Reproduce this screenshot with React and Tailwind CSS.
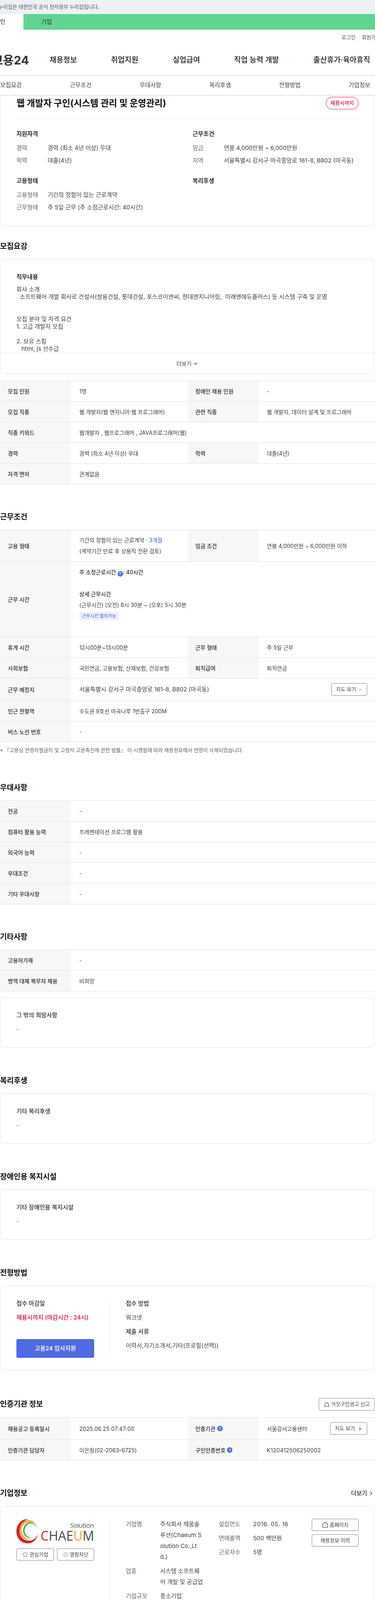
import { ChevronDown, ChevronRight, Star, X } from 'lucide-react';

function SectionTitle({ children, className = '' }) {
  return <h2 className={`h-[28px] mb-[18px] text-[19px] leading-[28px] font-semibold text-[#111] ${className}`}>{children}</h2>;
}

function Help({ className = '' }) {
  return (
    <span className={`inline-flex items-center justify-center w-[14px] h-[14px] rounded-full bg-[#4f6be3] text-white text-[9px] leading-none font-bold align-[-2px] ${className}`}>?</span>
  );
}

function Th({ children }) {
  return <div className="flex items-center pl-[20px] bg-[#f7f7f8] text-[14px] font-medium text-[#333]">{children}</div>;
}

function Td({ children, wide }) {
  return <div className={`flex items-center pl-[21px] text-[14px] text-[#444] ${wide ? 'col-span-3' : ''}`}>{children}</div>;
}

// row with 2 or 4 cells, height includes the bottom border
function Row({ h = 'h-[53px]', a, b, c, d }) {
  return (
    <div className={`grid grid-cols-[182px_298px_182px_298px] border-b border-[#e0e2e5] ${h}`}>
      <Th>{a}</Th>
      <Td wide={c === undefined}>{b}</Td>
      {c !== undefined && <Th>{c}</Th>}
      {c !== undefined && <Td>{d}</Td>}
    </div>
  );
}

function Table({ children }) {
  return <div className="border-t border-[#e0e2e5] -mb-[1px]">{children}</div>;
}

function TextCard({ title }) {
  return (
    <div className="h-[129px] px-[41px] pt-[33px] border border-[#e0e2e5] rounded-[10px]">
      <p className="h-[24px] leading-[24px] text-[15px] font-medium text-[#333]">{title}</p>
      <p className="mt-[12px] h-[24px] leading-[24px] text-[14px] text-[#555]">-</p>
    </div>
  );
}

function InfoRow({ label, value }) {
  return (
    <div className="flex h-[32px] items-center text-[15px]">
      <span className="w-[80px] shrink-0 text-[#666]">{label}</span>
      <span className="text-[#444] whitespace-nowrap">{value}</span>
    </div>
  );
}

function OutlineBtn({ children, className = '' }) {
  return (
    <button className={`flex items-center justify-center border border-[#7d8085] rounded-[4px] bg-white text-[13px] text-[#444] whitespace-nowrap ${className}`}>
      {children}
    </button>
  );
}

function Logo() {
  return (
    <svg viewBox="0 0 199 63" className="w-[199px] h-[63px] block">
      <path fill="#d2232a" d="M30 .5C10 1 0 17 0 33c0 17 13 30 29 30 14 0 23-10 26-23-5 11-14 17-24 16C17 55 8 44 8 31 8 17 17 6 30 .5Z" />
      <path fill="#f5a33b" d="M48 10C41 3.500 31 2 23 5 13 9 7 19 8.500 32 10 44 19 54 33 55 24 50 14 42 13 30c-.5-11 7-20 17-21 6-.5 13 0 18 1Z" />
      <path fill="#4cb748" d="M54 26C52 15 44 9 36 9 25 9 17 19 17 31c0 11 8 19 22 19-9-3-18-9-18-19 0-10 8-19 16-19 7 0 13 5 17 14Z" />
      <text x="198" y="23" textAnchor="end" fontFamily="Open Sans" fontSize="17" letterSpacing="-0.6" fill="#58595b">
        <tspan fill="#4cb748" fontWeight="600">S</tspan>olution
      </text>
      <text x="62" y="56" textLength="137" lengthAdjust="spacingAndGlyphs" fontFamily="Open Sans" fontSize="35" fill="#4a4a4c">
        <tspan fill="#d2232a">C</tspan>HAE<tspan fill="#f5a33b">U</tspan>M
      </text>
    </svg>
  );
}

const hSub = ['모집요강', '근무조건', '우대사항', '복리후생', '전형방법', '기업정보'];

export default function App() {
  return (
    <div className="w-[960px] overflow-hidden bg-white font-['Inter','Noto_Sans_CJK_KR',sans-serif]">
      {/* gov banner */}
      <div className="h-[36px] bg-[#edf0f5] flex items-center text-[13px] text-[#555] whitespace-nowrap">
        <span className="-ml-[4px]">누리집은 대한민국 공식 전자정부 누리집입니다.</span>
      </div>

      {/* user type tabs */}
      <div className="h-[40px] bg-[#61d491] flex items-center text-[15px] text-[#333]">
        <div className="w-[60px] h-full bg-white flex items-center"><span>인</span></div>
        <div className="w-[119px] h-full flex items-center justify-center border-r border-[#55c584]">기업</div>
      </div>

      {/* header */}
      <div className="h-[118px] border-b-2 border-[#eeeeee]">
        <div className="flex justify-end gap-[16px] -mr-[14px] pt-[10px] h-[38px] text-[13px] text-[#555] whitespace-nowrap">
          <span>로그인</span>
          <span>회원가입</span>
        </div>
        <nav className="flex items-center h-[56px] mt-[12px] text-[19px] font-medium text-[#222] whitespace-nowrap">
          <span className="-ml-[20px] w-[147px] text-[30px] font-bold text-[#333]">고용24</span>
          <span className="w-[157px]">채용정보</span>
          <span className="w-[158px]">취업지원</span>
          <span className="w-[157px]">실업급여</span>
          <span className="w-[203px]">직업 능력 개발</span>
          <span>출산휴가·육아휴직</span>
        </nav>
      </div>

      {/* section tabs */}
      <div className="relative z-10 h-[49px] flex -ml-[61px] items-center bg-white shadow-[0_1px_3px_rgba(0,0,0,0.2)] w-[1100px] text-[15px] text-[#444]">
        {hSub.map(t => (
          <span key={t} className="w-[178.4px] text-center">{t}</span>
        ))}
      </div>

      {/* summary card */}
      <div className="h-[336px] px-[41px] pt-[5px] border-x border-b border-[#e0e2e5] rounded-b-[10px]">
        <div className="flex items-center justify-between h-[32px]">
          <h1 className="text-[23px] font-bold text-[#111] whitespace-nowrap">웹 개발자 구인(시스템 관리 및 운영관리)</h1>
          <span className="w-[84px] h-[32px] flex items-center justify-center rounded-full border border-[#e6004d] text-[#e6004d] text-[13px] font-medium">채용시까지</span>
        </div>
        <div className="mt-[25px] border-t border-[#eeeeee]" />
        <div className="grid grid-cols-[451px_1fr] mt-[25px]">
          <div>
            <h3 className="h-[24px] leading-[24px] text-[15px] font-semibold text-[#333] mb-[8px]">지원자격</h3>
            <InfoRow label="경력" value="경력 (최소 4년 이상) 우대" />
            <InfoRow label="학력" value="대졸(4년)" />
          </div>
          <div>
            <h3 className="h-[24px] leading-[24px] text-[15px] font-semibold text-[#333] mb-[8px]">근무조건</h3>
            <InfoRow label="임금" value="연봉 4,000만원 ~ 6,000만원" />
            <InfoRow label="지역" value="서울특별시 강서구 마곡중앙로 161-8, B802 (마곡동)" />
          </div>
          <div className="mt-[24px]">
            <h3 className="h-[24px] leading-[24px] text-[15px] font-semibold text-[#333] mb-[8px]">고용형태</h3>
            <InfoRow label="고용형태" value="기간의 정함이 있는 근로계약" />
            <InfoRow label="근무형태" value="주 5일 근무 (주 소정근로시간: 40시간)" />
          </div>
          <div className="mt-[24px]">
            <h3 className="h-[24px] leading-[24px] text-[15px] font-semibold text-[#333] mb-[8px]">복리후생</h3>
          </div>
        </div>
      </div>

      {/* recruit */}
      <section className="mt-[38px]">
        <SectionTitle>모집요강</SectionTitle>
        <div className="border border-[#e0e2e5] rounded-[10px] overflow-hidden">
          <div className="h-[240px] px-[41px] pt-[33px] overflow-hidden border-b border-[#e0e2e5]">
            <h3 className="h-[24px] leading-[24px] text-[15px] font-semibold text-[#333] mb-[10px]">직무내용</h3>
            <p className="text-[15px] leading-[19px] text-[#444] whitespace-pre">{`회사 소개
  소프트웨어 개발 회사로 건설사(쌍용건설, 롯데건설, 포스코이앤씨, 현대엔지니어링,  미래엔에듀플러스) 등 시스템 구축 및 운영


모집 분야 및 자격 요건
1. 고급 개발자 모집

2. 보유 스킬
   html, js 선수급`}</p>
          </div>
          <div className="h-[53px] flex items-center justify-center gap-[4px] text-[14px] text-[#444]">
            더보기 <ChevronDown className="w-[14px] h-[14px]" strokeWidth={2.5} />
          </div>
        </div>
      </section>

      <div className="mt-[16px]">
        <Table>
          <Row a="모집 인원" b="1명" c="장애인 채용 인원" d="-" />
          <Row a="모집 직종" b="웹 개발자(웹 엔지니어·웹 프로그래머)" c="관련 직종" d="웹 개발자, 데이터 설계 및 프로그래머" />
          <Row a="직종 키워드" b="웹개발자 , 웹프로그래머 , JAVA프로그래머(웹)" />
          <Row a="경력" b="경력 (최소 4년 이상) 우대" c="학력" d="대졸(4년)" />
          <Row a="자격 면허" b="관계없음" />
        </Table>
      </div>

      {/* work conditions */}
      <section className="mt-[71px]">
        <SectionTitle>근무조건</SectionTitle>
        <Table>
          <Row
            h="h-[81px]"
            a="고용 형태"
            b={
              <div className="leading-[28px]">
                <p>기간의 정함이 있는 근로계약 <span className="text-[#3d63dd]">· 3개월</span></p>
                <p>(계약기간 만료 후 상용직 전환 검토)</p>
              </div>
            }
            c="임금 조건"
            d="연봉 4,000만원 ~ 6,000만원 이하"
          />
          <Row
            h="h-[193px]"
            a="근무 시간"
            b={
              <div className="self-start pt-[13px] leading-[28px]">
                <p className="font-medium text-[#333]">주 소정근로시간 <Help />: 40시간</p>
                <p className="mt-[28px] font-medium text-[#333]">상세 근무시간</p>
                <p>(근무시간) (오전) 8시 30분 ~ (오후) 5시 30분</p>
                <span className="block w-[101px] mt-[3px] text-center h-[22px] leading-[22px] rounded-[3px] bg-[#eef1fd] text-[11.5px] text-[#3d63dd]">근무시간 협의가능</span>
              </div>
            }
          />
          <Row a="휴게 시간" b="12시00분~13시00분" c="근무 형태" d="주 5일 근무" />
          <Row a="사회보험" b="국민연금, 고용보험, 산재보험, 건강보험" c="퇴직급여" d="퇴직연금" />
          <Row
            h="h-[57px]"
            a="근무 예정지"
            b={
              <div className="flex items-center justify-between w-full pr-[20px] text-[15px]">
                <span>서울특별시 강서구 마곡중앙로 161-8, B802 (마곡동)</span>
                <OutlineBtn className="w-[92px] h-[32px] gap-[4px]">지도 보기 <ChevronDown className="w-[12px] h-[12px]" /></OutlineBtn>
              </div>
            }
          />
          <Row a="인근 전철역" b="수도권 9호선 마곡나루 1번출구 200M" />
          <Row a="버스 노선 번호" b="-" />
        </Table>
        <p className="mt-[11px] h-[20px] leading-[20px] text-[13px] text-[#666] whitespace-nowrap">• 『고용상 연령차별금지 및 고령자 고용촉진에 관한 법률』 이 시행됨에 따라 채용정보에서 연령이 삭제되었습니다.</p>
      </section>

      {/* preference */}
      <section className="mt-[73px]">
        <SectionTitle>우대사항</SectionTitle>
        <Table>
          <Row a="전공" b="-" />
          <Row a="컴퓨터 활용 능력" b="프레젠테이션 프로그램 활용" />
          <Row a="외국어 능력" b="-" />
          <Row a="우대조건" b="-" />
          <Row a="기타 우대사항" b="-" />
        </Table>
      </section>

      {/* etc */}
      <section className="mt-[71px]">
        <SectionTitle>기타사항</SectionTitle>
        <Table>
          <Row a="고용허가제" b="-" />
          <Row a="병역 대체 복무자 채용" b="비희망" />
        </Table>
        <div className="mt-[16px]">
          <TextCard title="그 밖의 희망사항" />
        </div>
      </section>

      <section className="mt-[71px]">
        <SectionTitle>복리후생</SectionTitle>
        <TextCard title="기타 복리후생" />
      </section>

      <section className="mt-[71px]">
        <SectionTitle>장애인용 복지시설</SectionTitle>
        <TextCard title="기타 장애인용 복지시설" />
      </section>

      {/* apply */}
      <section className="mt-[71px]">
        <SectionTitle>전형방법</SectionTitle>
        <div className="flex px-[41px] pt-[32px] pb-[31px] border border-[#e0e2e5] rounded-[10px]">
          <div className="w-[240px] h-[152px] pr-[40px] border-r border-[#eeeeee] flex flex-col">
            <p className="h-[26px] leading-[26px] text-[15px] font-medium text-[#333]">접수 마감일</p>
            <p className="mt-[10px] h-[26px] leading-[26px] text-[15px] font-medium text-[#e6004d] whitespace-nowrap">채용시까지 (마감시간 : 24시)</p>
            <button className="mt-auto h-[48px] rounded-[4px] bg-[#4f6be3] text-white text-[15px] font-medium">고용24 입사지원</button>
          </div>
          <div className="pl-[40px]">
            <p className="h-[26px] leading-[26px] text-[15px] font-medium text-[#333]">접수 방법</p>
            <p className="mt-[10px] h-[26px] leading-[26px] text-[15px] text-[#444]">워크넷</p>
            <p className="mt-[10px] h-[26px] leading-[26px] text-[15px] font-medium text-[#333]">제출 서류</p>
            <p className="mt-[10px] h-[26px] leading-[26px] text-[15px] text-[#444]">이력서,자기소개서,기타(프로필(선택))</p>
          </div>
        </div>
      </section>

      {/* agency */}
      <section className="mt-[71px]">
        <div className="flex items-center justify-between h-[32px] mb-[17px]">
          <h2 className="text-[19px] font-semibold text-[#111]">인증기관 정보</h2>
          <OutlineBtn className="w-[144px] h-[32px] gap-[3px]">
            <svg viewBox="0 0 16 16" className="w-[15px] h-[15px]" fill="none" stroke="#444" strokeWidth="1.200">
              <path d="M3 13V7.500a5 5 0 0 1 10 0V13" />
              <path d="M9 4.500a3 3 0 0 1 1.500 1.500" />
              <path d="M1 13.500h14" />
            </svg>
            거짓구인광고 신고
          </OutlineBtn>
        </div>
        <Table>
          <Row
            h="h-[57px]"
            a="채용공고 등록일시"
            b={<span className="tracking-[0.15px]">2025.06.25 07:47:00</span>}
            c={<>인증기관 <Help className="ml-[4px]" /></>}
            d={
              <div className="flex items-center justify-between w-full pr-[20px]">
                <span>서울강서고용센터</span>
                <OutlineBtn className="w-[95px] h-[32px] gap-[6px]">지도 보기 <ChevronRight className="w-[13px] h-[13px]" strokeWidth={3} /></OutlineBtn>
              </div>
            }
          />
          <Row
            a="인증기관 담당자"
            b="이은정(02-2063-6725)"
            c={<>구인인증번호 <Help className="ml-[4px]" /></>}
            d={<span className="tracking-[0.3px]">K120412506250002</span>}
          />
        </Table>
      </section>

      {/* company */}
      <section className="mt-[71px]">
        <div className="flex items-center justify-between h-[28px] mb-[18px]">
          <h2 className="text-[19px] font-semibold text-[#111]">기업정보</h2>
          <span className="flex items-center gap-[2px] pr-[2px] text-[15px] font-medium text-[#333]">더보기 <ChevronRight className="w-[16px] h-[16px]" /></span>
        </div>
        <div className="flex px-[41px] pt-[32px] pb-[30px] border border-[#e0e2e5] rounded-[10px]">
          <div className="w-[240px] h-[211px] pr-[40px] border-r border-[#eeeeee]">
            <Logo />
            <div className="flex gap-[8px] mt-[13px]">
              <OutlineBtn className="w-[96px] h-[31px] gap-[4px]"><Star className="w-[15px] h-[15px]" strokeWidth={1.3} />관심기업</OutlineBtn>
              <OutlineBtn className="w-[95px] h-[31px] gap-[4px]">
                <span className="flex items-center justify-center w-[14px] h-[14px] rounded-full bg-[#d9d9d9]"><X className="w-[10px] h-[10px] text-white" strokeWidth={3} /></span>
                열람차단
              </OutlineBtn>
            </div>
          </div>
          <div className="pl-[40px] w-[279px] text-[15px] leading-[28px] text-[#444]">
            <div className="flex">
              <span className="w-[88px] shrink-0 text-[#666]">기업명</span>
              <span className="whitespace-nowrap">주식회사 채움솔<br />루션(Chaeum S<br />olution Co.,Lt<br />d.)</span>
            </div>
            <div className="flex mt-[8px]">
              <span className="w-[88px] shrink-0 text-[#666]">업종</span>
              <span className="whitespace-nowrap">시스템 소프트웨<br />어 개발 및 공급업</span>
            </div>
            <div className="flex mt-[8px]"><span className="w-[88px] shrink-0 text-[#666]">기업규모</span><span>중소기업</span></div>
          </div>
          <div className="w-[239px] flex flex-col gap-[8px] text-[15px] leading-[28px] text-[#444]">
            <div className="flex"><span className="w-[88px] shrink-0 text-[#666]">설립연도</span><span className="tracking-[0.5px]">2016. 05. 16</span></div>
            <div className="flex"><span className="w-[88px] shrink-0 text-[#666]">연매출액</span><span>500 백만원</span></div>
            <div className="flex"><span className="w-[88px] shrink-0 text-[#666]">근로자수</span><span>5명</span></div>
          </div>
          <div className="flex flex-col gap-[9px]">
            <OutlineBtn className="w-[120px] h-[31px] gap-[3px]">
              <svg viewBox="0 0 16 16" className="w-[17px] h-[17px]" fill="none" stroke="#444" strokeWidth="1.200" strokeLinejoin="round">
                <path d="M2 7 8 1.500 14 7v6.500a1 1 0 0 1-1 1H3a1 1 0 0 1-1-1Z" />
                <path d="M8 9v2.500" />
              </svg>
              홈페이지
            </OutlineBtn>
            <OutlineBtn className="w-[120px] h-[31px]">채용정보 이력</OutlineBtn>
          </div>
        </div>
      </section>
    </div>
  );
}
